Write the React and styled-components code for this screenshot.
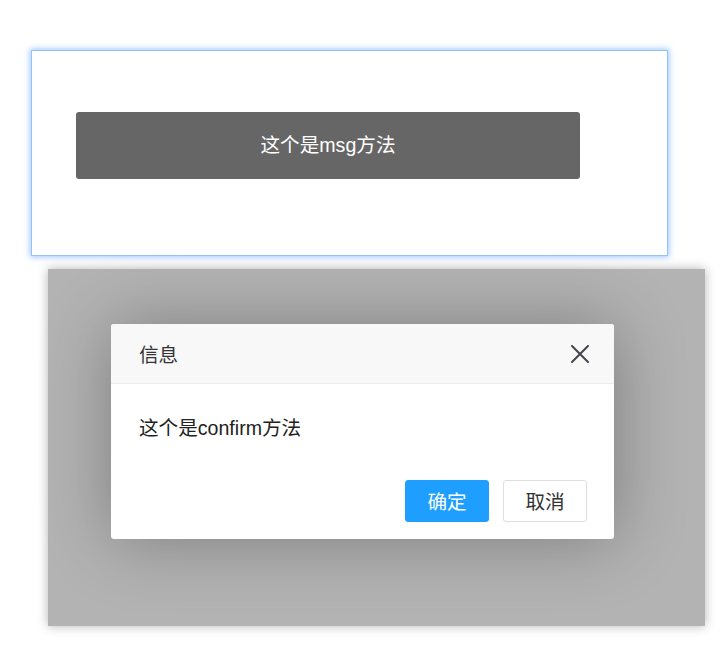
import React from "react";
import styled, { createGlobalStyle } from "styled-components";

const Global = createGlobalStyle`
  html, body { margin: 0; padding: 0; background: #fff; }
  body {
    font-family: "Liberation Sans", "Noto Sans CJK SC", sans-serif;
    color: #333;
  }
`;

const Page = styled.div`
  display: flex;
  flex-direction: column;
  align-items: flex-start;
  gap: 13px;
  padding: 50px 0 40px;
`;

const Frame = styled.div`
  box-sizing: border-box;
  margin-left: 31px;
  width: 637px;
  height: 206px;
  background: #fff;
  border: 1px solid #94c2ff;
  box-shadow: 0 0 6px 1px rgba(60, 140, 255, 0.5);
  padding: 61px 0 0 44px;
`;

const Msg = styled.div`
  box-sizing: border-box;
  width: 504px;
  height: 67px;
  background: rgba(0, 0, 0, 0.6);
  border-radius: 3px;
  color: #fff;
  font-size: 19.6px;
  line-height: 67px;
  text-align: center;
`;

const Shade = styled.div`
  box-sizing: border-box;
  margin-left: 48px;
  width: 657px;
  height: 357px;
  background: #b3b3b3;
  box-shadow: 0 0 10px rgba(0, 0, 0, 0.3);
  padding: 55px 0 0 63px;
`;

const Dialog = styled.div`
  width: 503px;
  background: #fff;
  border-radius: 3px;
  box-shadow: 1px 1px 70px rgba(0, 0, 0, 0.3);
  overflow: hidden;
`;

const Header = styled.div`
  display: flex;
  align-items: center;
  justify-content: space-between;
  height: 59px;
  padding: 0 23px 0 28px;
  background: #f8f8f8;
  border-bottom: 1px solid #ececec;
  font-size: 19.6px;
  color: #333;
`;

const Close = styled.button`
  display: flex;
  align-items: center;
  justify-content: center;
  width: 22px;
  height: 22px;
  padding: 0;
  border: 0;
  background: transparent;
  cursor: pointer;
`;

const Content = styled.div`
  padding: 28px;
  font-size: 19.6px;
  line-height: 33.6px;
  color: #222;
`;

const Buttons = styled.div`
  display: flex;
  justify-content: flex-end;
  gap: 14px;
  padding: 6px 27px 17px;
`;

const Btn = styled.button`
  box-sizing: border-box;
  width: 84px;
  height: 42px;
  padding: 0;
  border-radius: 3px;
  font-family: inherit;
  font-size: 19.6px;
  border: 1px solid ${(p) => (p.$primary ? "#1e9fff" : "#dedede")};
  background: ${(p) => (p.$primary ? "#1e9fff" : "#fff")};
  color: ${(p) => (p.$primary ? "#fff" : "#333")};
  cursor: pointer;
`;

export default function App() {
  return (
    <>
      <Global />
      <Page>
        <Frame>
          <Msg>这个是msg方法</Msg>
        </Frame>
        <Shade>
          <Dialog>
            <Header>
              <span>信息</span>
              <Close aria-label="关闭">
                <svg width="20" height="20" viewBox="0 0 20 20">
                  <path
                    d="M2 2 L18 18 M18 2 L2 18"
                    stroke="#44444f"
                    strokeWidth="2"
                    strokeLinecap="round"
                  />
                </svg>
              </Close>
            </Header>
            <Content>这个是confirm方法</Content>
            <Buttons>
              <Btn $primary>确定</Btn>
              <Btn>取消</Btn>
            </Buttons>
          </Dialog>
        </Shade>
      </Page>
    </>
  );
}
